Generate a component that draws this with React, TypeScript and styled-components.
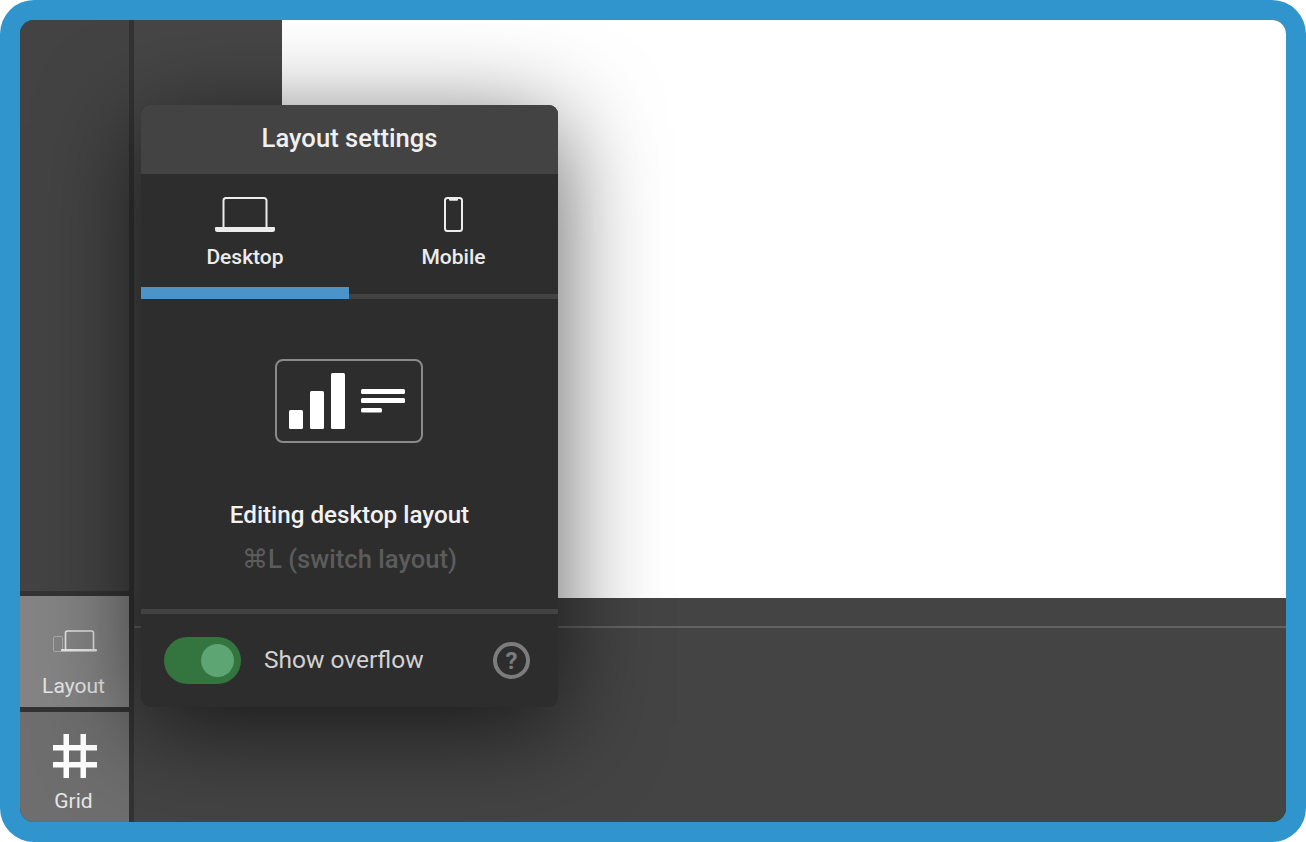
import styled, { createGlobalStyle } from "styled-components";

const GlobalStyle = createGlobalStyle`
  html, body {
    margin: 0;
    padding: 0;
    background: #fff;
  }
  * {
    box-sizing: border-box;
  }
`;

function LaptopIcon() {
  return (
    <svg width="60" height="35" viewBox="0 0 60 35" fill="none">
      <path
        d="M8.5 31V3.5A2.5 2.5 0 0 1 11 1h38a2.5 2.5 0 0 1 2.5 2.5V31"
        stroke="#ececec"
        strokeWidth="2"
      />
      <path
        d="M1 30h58a1 1 0 0 1 1 1v1.5a2.5 2.5 0 0 1-2.5 2.5h-55A2.5 2.5 0 0 1 0 32.5V31a1 1 0 0 1 1-1z"
        fill="#ececec"
      />
    </svg>
  );
}

function PhoneIcon() {
  return (
    <svg width="19" height="35" viewBox="0 0 19 35" fill="none">
      <rect x="1" y="1" width="17" height="33" rx="2.5" stroke="#ececec" strokeWidth="2" />
      <path d="M5 1.5h9v1.2a1 1 0 0 1-1 1H6a1 1 0 0 1-1-1z" fill="#ececec" />
    </svg>
  );
}

function LayoutButtonIcon() {
  return (
    <svg width="44" height="22" viewBox="0 0 44 22" fill="none">
      <rect x="0.5" y="6.5" width="9" height="15" rx="1.5" stroke="#a9a9a9" strokeWidth="1" />
      <path
        d="M12.5 19V3A2 2 0 0 1 14.5 1h24a2 2 0 0 1 2 2v16"
        stroke="#e4e4e4"
        strokeWidth="1.6"
      />
      <rect x="8" y="19" width="36" height="2.4" rx="1" fill="#e8e8e8" />
    </svg>
  );
}

function GridIcon() {
  return (
    <svg width="44" height="44" viewBox="0 0 44 44" fill="#fff">
      <rect x="10.5" y="0" width="5.5" height="44" />
      <rect x="27.5" y="0" width="5.5" height="44" />
      <rect x="0" y="11" width="44" height="5.5" />
      <rect x="0" y="28" width="44" height="5.5" />
    </svg>
  );
}

function DesktopLayoutIllustration() {
  return (
    <svg width="148" height="84" viewBox="0 0 148 84" fill="none">
      <rect x="1" y="1" width="146" height="82" rx="7" stroke="#8a8a8a" strokeWidth="2" />
      <g fill="#fff">
        <rect x="14" y="51" width="14" height="19" rx="1.5" />
        <rect x="35" y="32" width="14" height="38" rx="1.5" />
        <rect x="56" y="14" width="14" height="56" rx="1.5" />
        <rect x="86" y="30" width="44" height="5" rx="1.5" />
        <rect x="86" y="39" width="44" height="5" rx="1.5" />
        <rect x="86" y="49" width="21" height="4.5" rx="1.5" />
      </g>
    </svg>
  );
}

export default function App() {
  return (
    <>
      <GlobalStyle />
      <Frame>
        <Screen>
          <Sidebar>
            <SidebarFill />
            <ToolButton $active>
              <LayoutButtonIcon />
              <ToolLabel>Layout</ToolLabel>
            </ToolButton>
            <ToolButton>
              <GridIcon />
              <ToolLabel>Grid</ToolLabel>
            </ToolButton>
          </Sidebar>
          <Main>
            <TopRow>
              <SidePanel />
              <Canvas />
            </TopRow>
            <Timeline>
              <TimelineHeader />
            </Timeline>
          </Main>
          <Popover>
            <PopoverHeader>Layout settings</PopoverHeader>
            <Tabs>
              <Tab $active>
                <TabIcon>
                  <LaptopIcon />
                </TabIcon>
                <TabLabel>Desktop</TabLabel>
              </Tab>
              <Tab>
                <TabIcon>
                  <PhoneIcon />
                </TabIcon>
                <TabLabel>Mobile</TabLabel>
              </Tab>
            </Tabs>
            <PopoverBody>
              <Illustration>
                <DesktopLayoutIllustration />
              </Illustration>
              <EditingTitle>Editing desktop layout</EditingTitle>
              <Shortcut>⌘L (switch layout)</Shortcut>
            </PopoverBody>
            <PopoverFooter>
              <Toggle>
                <ToggleKnob />
              </Toggle>
              <OverflowLabel>Show overflow</OverflowLabel>
              <HelpIcon>?</HelpIcon>
            </PopoverFooter>
          </Popover>
        </Screen>
      </Frame>
    </>
  );
}

const Frame = styled.div`
  width: 1306px;
  height: 842px;
  padding: 20px;
  background-color: #3094cd;
  border-radius: 34px;
  overflow: hidden;
`;

const Screen = styled.div`
  position: relative;
  display: flex;
  width: 100%;
  height: 100%;
  border-radius: 14px;
  overflow: hidden;
  background-color: #333;
  font-family: Roboto, "Liberation Sans", sans-serif;
`;

const Sidebar = styled.div`
  display: flex;
  flex-direction: column;
  gap: 5px;
  flex-shrink: 0;
  width: 109px;
  height: 100%;
`;

const SidebarFill = styled.div`
  flex: none;
  height: 571px;
  background-color: #434343;
`;

const ToolButton = styled.div<{ $active?: boolean }>`
  display: flex;
  flex-direction: column;
  align-items: center;
  justify-content: space-between;
  flex: none;
  height: ${({ $active }) => ($active ? "111px" : "110px")};
  padding: ${({ $active }) => ($active ? "34px" : "22px")} 0 9px;
  background-color: ${({ $active }) => ($active ? "#848484" : "#6e6e6e")};
`;

const ToolLabel = styled.span`
  margin-right: 2px;
  font-size: 21px;
  line-height: 24px;
  color: #e6e6e6;
`;

const Main = styled.div`
  display: flex;
  flex-direction: column;
  flex: 1;
  min-width: 0;
  margin-left: 5px;
`;

const TopRow = styled.div`
  display: flex;
  flex: none;
  height: 578px;
`;

const SidePanel = styled.div`
  width: 148px;
  background-color: #464646;
`;

const Canvas = styled.div`
  flex: 1;
  background-color: #fff;
`;

const Timeline = styled.div`
  flex: 1;
  background-color: #444;
`;

const TimelineHeader = styled.div`
  height: 30px;
  border-bottom: 2px solid #636363;
`;

const Popover = styled.div`
  position: absolute;
  left: 121px;
  top: 85px;
  display: flex;
  flex-direction: column;
  width: 417px;
  height: 602px;
  border-radius: 9px;
  overflow: hidden;
  background-color: #2d2d2d;
  box-shadow: 0 20px 100px rgba(0, 0, 0, 0.65);
`;

const PopoverHeader = styled.div`
  display: flex;
  align-items: center;
  justify-content: center;
  flex: none;
  height: 69px;
  padding-bottom: 3px;
  background-color: #434343;
  font-size: 25.6px;
  font-weight: 500;
  color: #f0f0f0;
`;

const Tabs = styled.div`
  display: flex;
  flex: none;
  height: 125px;
`;

const Tab = styled.div<{ $active?: boolean }>`
  display: flex;
  flex-direction: column;
  align-items: center;
  flex: ${({ $active }) => ($active ? "0 0 208px" : "1")};
  padding-top: 23px;
  border-bottom: ${({ $active }) =>
    $active ? "12px solid #4c93c8" : "5px solid #434343"};
`;

const TabIcon = styled.div`
  display: flex;
  height: 35px;
`;

const TabLabel = styled.span`
  margin-top: 13px;
  font-size: 21px;
  line-height: 24px;
  font-weight: 500;
  color: #ececec;
`;

const PopoverBody = styled.div`
  display: flex;
  flex-direction: column;
  align-items: center;
  flex: none;
  height: 315px;
  padding-top: 60px;
  border-bottom: 5px solid #434343;
`;

const Illustration = styled.div`
  display: flex;
  margin-left: -1px;
`;

const EditingTitle = styled.div`
  margin-top: 57px;
  font-size: 24.2px;
  line-height: 30px;
  font-weight: 500;
  color: #f2f2f2;
`;

const Shortcut = styled.div`
  margin-top: 14px;
  font-size: 25.6px;
  line-height: 30px;
  font-weight: 500;
  color: #5c5c5c;
`;

const PopoverFooter = styled.div`
  display: flex;
  align-items: center;
  flex: 1;
  padding: 0 28px 0 23px;
`;

const Toggle = styled.div`
  display: flex;
  align-items: center;
  justify-content: flex-end;
  width: 77px;
  height: 47px;
  padding-right: 7px;
  border-radius: 24px;
  background-color: #34753f;
`;

const ToggleKnob = styled.div`
  width: 33px;
  height: 33px;
  border-radius: 50%;
  background-color: #5da573;
`;

const OverflowLabel = styled.span`
  flex: 1;
  margin-left: 23px;
  margin-bottom: 3px;
  font-size: 24.5px;
  color: #d2d2d2;
`;

const HelpIcon = styled.div`
  display: flex;
  align-items: center;
  justify-content: center;
  width: 37px;
  height: 37px;
  border: 4px solid #7c7c7c;
  border-radius: 50%;
  font-size: 24px;
  font-weight: 700;
  color: #7c7c7c;
`;
